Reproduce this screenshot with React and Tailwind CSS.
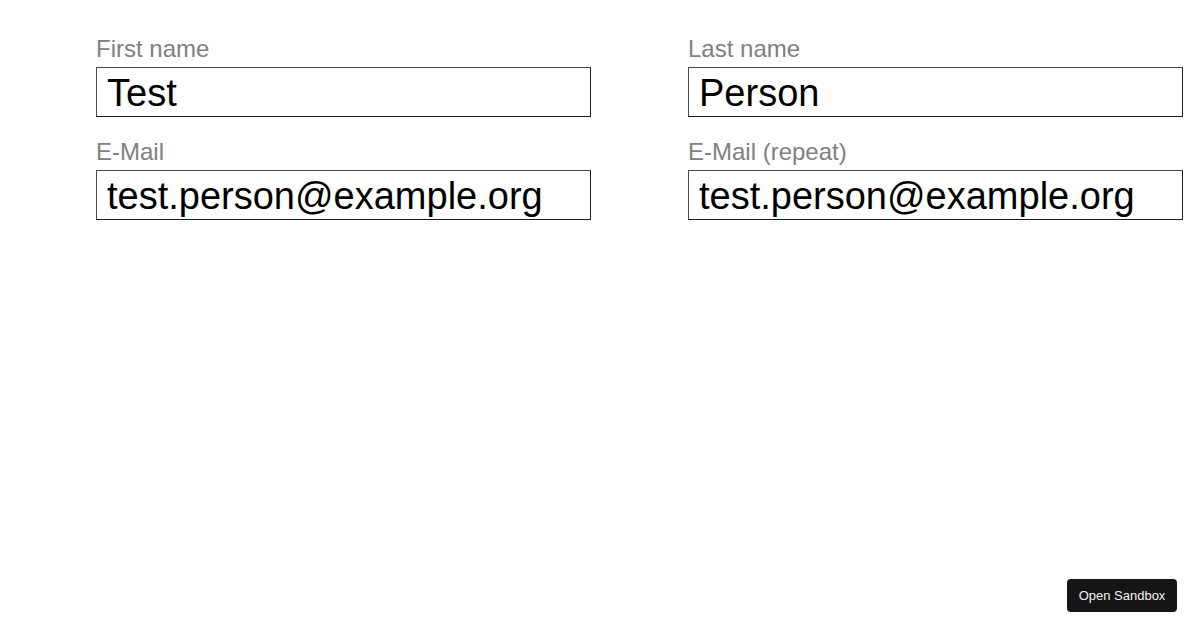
export default function App() {
    const fields = [
        { id: "first", label: "First name", value: "Test" },
        { id: "last", label: "Last name", value: "Person" },
        { id: "email", label: "E-Mail", value: "test.person@example.org" },
        { id: "email2", label: "E-Mail (repeat)", value: "test.person@example.org" },
    ];

    return (
        <div className="w-full h-[630px] bg-white font-['Liberation_Sans',Arial,sans-serif]">
            <div className="pl-[96px] pt-[35px] grid grid-cols-[495px_495px] gap-x-[97px] gap-y-[21px]">
                {fields.map((field) => (
                    <div key={field.id} className="flex flex-col">
                        <label htmlFor={field.id} className="text-[24px] leading-[28px] text-[#808080] mb-[4px]">
                            {field.label}
                        </label>
                        <input
                            id={field.id}
                            readOnly
                            defaultValue={field.value}
                            className="w-full h-[50px] border border-t-[#4a4a4a] border-l-[#4a4a4a] border-b-[#1c1c1c] border-r-[#1c1c1c] pl-[10px] pt-[3px] text-[38px] text-black outline-none"
                        />
                    </div>
                ))}
            </div>

            <button className="fixed right-[23px] bottom-[18px] w-[110px] h-[33px] rounded-[4px] bg-[#151515] text-[#f2f2f2] text-[13px] font-['Liberation_Sans',Arial,sans-serif]">
                Open Sandbox
            </button>
        </div>
    );
}
